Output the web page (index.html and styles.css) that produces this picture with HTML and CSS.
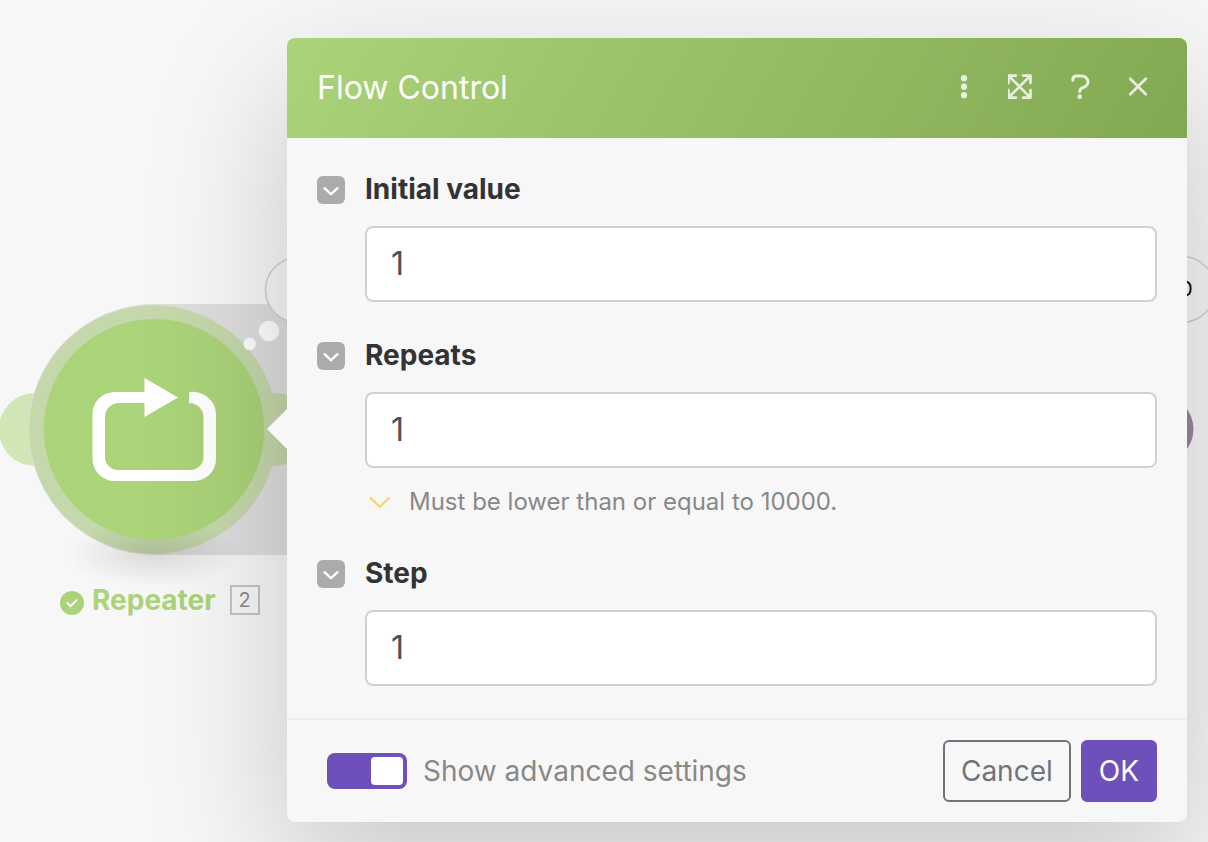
FILE: index.html
```html
<!DOCTYPE html>
<html lang="en">
<head>
<meta charset="utf-8">
<meta name="viewport" content="width=device-width, initial-scale=1">
<title>Flow Control</title>
<link rel="stylesheet" href="styles.css">
</head>
<body>
<div class="canvas">
  <svg class="scene" width="1208" height="842" viewBox="0 0 1208 842" aria-hidden="true">
    <defs>
      <radialGradient id="ground">
        <stop offset="0" stop-color="#000" stop-opacity=".12"/>
        <stop offset=".5" stop-color="#000" stop-opacity=".06"/>
        <stop offset="1" stop-color="#000" stop-opacity="0"/>
      </radialGradient>
    </defs>
    <rect x="-1" y="393" width="74" height="73" rx="36" fill="#d1e5b5"/>
    <path d="M154 304H420V555H154A125.500 125.500 0 0 1 154 304Z" fill="#dedede"/>
    <rect x="237" y="393" width="74" height="73" rx="36" fill="#c3d6a9"/>
    <circle cx="153.500" cy="429.500" r="124.300" fill="#c5d8ab"/>
    <ellipse cx="154" cy="553" rx="88" ry="34" fill="url(#ground)"/>
    <circle cx="154" cy="429.300" r="110.300" fill="#abd379"/>
    <path fill="#fff" d="M145 392H115A22 22 0 0 0 92.500 414V459A22 22 0 0 0 115 481H194A22 22 0 0 0 216 459V414A24 22 0 0 0 189 392V403A14 14 0 0 1 203.500 417V457A13 13 0 0 1 190 470H118A13 13 0 0 1 105 457V417A14 14 0 0 1 119 403H144.500V417L178 397.500L144.500 378V392Z"/>
    <circle cx="298" cy="290" r="32.500" fill="#f7f7f7" stroke="#cfcfcf" stroke-width="1.500"/>
    <circle cx="269" cy="331" r="10.300" fill="#fff"/>
    <circle cx="249.700" cy="344" r="6.200" fill="#fff"/>
    <circle cx="1182" cy="289.500" r="33" fill="#f7f7f7" stroke="#cfcfcf" stroke-width="1.500"/>
    <circle cx="1159.500" cy="429" r="34" fill="#9b86a0"/>
  </svg>
  <span class="bubble-count">0</span>
  <div class="node-label">
    <svg width="24" height="24" viewBox="0 0 24 24" aria-hidden="true"><circle cx="12" cy="12" r="12" fill="#abd379"/><path d="M7.300 12l3.200 3.200 6-6" fill="none" stroke="#fff" stroke-width="2" stroke-linecap="round" stroke-linejoin="round"/></svg>
    <span class="node-name">Repeater</span>
    <span class="node-id">2</span>
  </div>
</div>

<main class="stage">
  <form class="dialog" aria-labelledby="title">
    <svg class="pointer" width="20" height="40" viewBox="0 0 20 40" aria-hidden="true"><path d="M20 0V40L0 20Z" fill="#f7f7f7"/></svg>
    <header class="head">
      <h1 class="title" id="title">Flow Control</h1>
      <div class="tools">
        <button class="tool" type="button" aria-label="More"><svg width="28" height="28" viewBox="0 0 28 28" fill="currentColor"><circle cx="14" cy="5.200" r="3.100"/><circle cx="14" cy="13.700" r="3.100"/><circle cx="14" cy="22.200" r="3.100"/></svg></button>
        <button class="tool" type="button" aria-label="Expand"><svg width="28" height="28" viewBox="2.500 0.400 28 28" fill="none" stroke="currentColor" stroke-width="2.700" stroke-linecap="round" stroke-linejoin="round"><path d="M10.500 3H3V10.500M17.500 3H25V10.500M10.500 25H3V17.500M17.500 25H25V17.500M3.500 3.500L24.500 24.500M24.500 3.500L3.500 24.500"/></svg></button>
        <button class="tool" type="button" aria-label="Help"><svg width="28" height="28" viewBox="0 0 28 28"><path d="M6.800 7.300V6.500C6.800 4.300 8.300 2.900 10.500 2.900H15.500C19 2.900 22 5.700 22 8.900C22 11.900 20 13.200 17.500 14.400C15 15.500 13.700 16 13.700 18.500" fill="none" stroke="currentColor" stroke-width="3" stroke-linecap="round"/><circle cx="13.700" cy="23.700" r="2.400" fill="currentColor"/></svg></button>
        <button class="tool" type="button" aria-label="Close"><svg width="28" height="28" viewBox="0 0 28 28" fill="none" stroke="currentColor" stroke-width="2.700" stroke-linecap="round"><path d="M6.200 5.700L21.800 21.300M21.800 5.700L6.200 21.300"/></svg></button>
      </div>
    </header>

    <div class="body">
      <section class="field">
        <button class="fold" type="button" aria-label="Collapse Initial value"><svg width="28" height="28" viewBox="0 0 28 28"><path d="M7.500 12.200L14 18.200L20.500 12.200" fill="none" stroke="#fff" stroke-width="2.400" stroke-linecap="round" stroke-linejoin="round"/></svg></button>
        <label class="name" for="initial">Initial value</label>
        <input class="value" id="initial" type="text" value="1">
      </section>
      <section class="field">
        <button class="fold" type="button" aria-label="Collapse Repeats"><svg width="28" height="28" viewBox="0 0 28 28"><path d="M7.500 12.200L14 18.200L20.500 12.200" fill="none" stroke="#fff" stroke-width="2.400" stroke-linecap="round" stroke-linejoin="round"/></svg></button>
        <label class="name" for="repeats">Repeats</label>
        <input class="value" id="repeats" type="text" value="1" aria-describedby="hint">
        <p class="hint" id="hint"><svg width="28" height="28" viewBox="0 0 28 28" aria-hidden="true"><path d="M5.500 10L14.800 18.700L24 10" fill="none" stroke="#fbd067" stroke-width="2.200" stroke-linecap="round" stroke-linejoin="round"/></svg>Must be lower than or equal to 10000.</p>
      </section>
      <section class="field">
        <button class="fold" type="button" aria-label="Collapse Step"><svg width="28" height="28" viewBox="0 0 28 28"><path d="M7.500 12.200L14 18.200L20.500 12.200" fill="none" stroke="#fff" stroke-width="2.400" stroke-linecap="round" stroke-linejoin="round"/></svg></button>
        <label class="name" for="step">Step</label>
        <input class="value" id="step" type="text" value="1">
      </section>
    </div>

    <footer class="foot">
      <label class="advanced"><input class="switch" type="checkbox" checked>Show advanced settings</label>
      <div class="actions">
        <button class="btn cancel" type="button">Cancel</button>
        <button class="btn ok" type="submit">OK</button>
      </div>
    </footer>
  </form>
</main>
</body>
</html>
```
FILE: styles.css
```css
* { box-sizing: border-box; }

body {
  margin: 0;
  min-height: 100vh;
  background: #f7f7f7;
  font-family: Inter, "Liberation Sans", sans-serif;
  position: relative;
  overflow: hidden;
}

svg { display: block; flex: none; }

button {
  font: inherit;
  padding: 0;
  border: 0;
  background: none;
  cursor: pointer;
}

.canvas { position: absolute; inset: 0; overflow: hidden; }
.scene { position: absolute; left: 0; top: 0; }

.bubble-count {
  position: absolute;
  left: 1180px;
  top: 277px;
  font-size: 20px;
  line-height: 24px;
  color: #000;
}

.node-label {
  position: absolute;
  left: 60px;
  top: 584px;
  display: flex;
  align-items: center;
  gap: 8px;
  height: 32px;
}
.node-label svg { margin-top: 6px; }
.node-name { font-size: 28px; font-weight: 700; line-height: 32px; color: #abd379; }
.node-id {
  width: 30px;
  height: 30px;
  margin-left: 6px;
  border: 2px solid #c4c4c4;
  font-size: 20px;
  line-height: 26px;
  text-align: center;
  color: #8c8c8c;
}

.stage { position: relative; padding: 38px 21px 20px 287px; }

.dialog {
  position: relative;
  background: #f7f7f7;
  border-radius: 8px;
  box-shadow: 0 48px 140px rgba(0, 0, 0, .2);
}
.pointer { position: absolute; left: -20px; top: 371px; }

.head {
  display: flex;
  align-items: center;
  justify-content: space-between;
  height: 100px;
  padding: 0 35px 0 30px;
  border-radius: 8px 8px 0 0;
  background: linear-gradient(120deg, #abd379, #83a852);
}
.title { margin: 0; font-size: 32px; font-weight: 400; line-height: 40px; color: #fff; }
.tools { display: flex; gap: 30px; padding-bottom: 2px; }
.tool { color: rgba(255, 255, 255, .8); }

.body {
  display: flex;
  flex-direction: column;
  gap: 40px;
  padding: 38px 30px 32px;
}
.field {
  display: grid;
  grid-template-columns: 28px 1fr;
  column-gap: 20px;
}
.fold { width: 28px; height: 28px; border-radius: 6px; background: #ababab; }
.name { font-size: 28px; font-weight: 700; line-height: 26px; color: #333; }
.value {
  grid-column: 2;
  width: 100%;
  height: 76px;
  margin-top: 22px;
  padding: 0 24px 2px;
  border: 2px solid #d1d1d1;
  border-radius: 8px;
  background: #fff;
  font: 400 32px/40px Inter, "Liberation Sans", sans-serif;
  color: #495057;
}
.hint {
  grid-column: 2;
  display: flex;
  align-items: center;
  gap: 16px;
  margin: 16px 0 0;
  font-size: 24px;
  font-weight: 400;
  line-height: 36px;
  color: #888;
}

.foot {
  display: flex;
  align-items: center;
  justify-content: space-between;
  padding: 20px 30px 20px 40px;
  border-top: 2px solid #ededed;
}
.advanced {
  display: flex;
  align-items: center;
  gap: 16px;
  font-size: 28px;
  font-weight: 400;
  line-height: 36px;
  color: #888;
}
.switch {
  appearance: none;
  display: flex;
  justify-content: flex-end;
  width: 80px;
  height: 36px;
  margin: 0;
  padding: 4px;
  border-radius: 8px;
  background: #6f50ba;
}
.switch::before {
  content: "";
  width: 32px;
  border-radius: 4px;
  background: #fff;
}
.actions { display: flex; gap: 10px; }
.btn {
  height: 62px;
  padding: 0 16px;
  border: 2px solid;
  border-radius: 6px;
  font-size: 28px;
  font-weight: 400;
  line-height: 36px;
}
.cancel { border-color: #6c757d; color: #6c757d; }
.ok { border-color: #6f50ba; background: #6f50ba; color: #fff; }
```
